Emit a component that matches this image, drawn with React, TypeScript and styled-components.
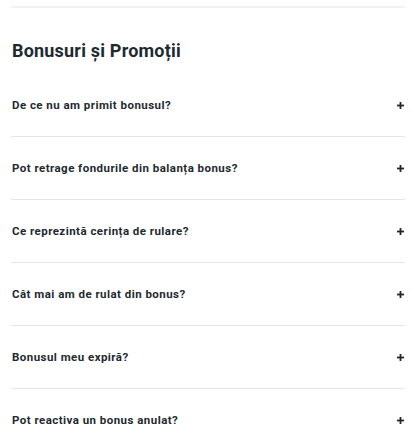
import React from "react";
import styled, { createGlobalStyle } from "styled-components";

const Global = createGlobalStyle`
  html, body { margin: 0; padding: 0; background: #ffffff; }
  body { font-family: Roboto, "Liberation Sans", sans-serif; color: #1e2a30; }
`;

const Page = styled.div`
  padding: 6px 12px 0 11px;
`;

const TopRule = styled.div`
  height: 2px;
  background: #f2f2f2;
`;

const Heading = styled.h2`
  margin: 0;
  padding: 31px 0 0 1px;
  height: 35px;
  font-size: 18px;
  font-weight: 700;
  line-height: 24px;
  color: #1e2a30;
  letter-spacing: 0.2px;
`;

const List = styled.div`
  display: flex;
  flex-direction: column;
`;

const Row = styled.div<{ $last?: boolean }>`
  display: flex;
  align-items: center;
  justify-content: space-between;
  height: 62px;
  padding-left: 1px;
  border-bottom: ${(p) => (p.$last ? "none" : "1px solid #e6e6e6")};
`;

const Question = styled.span`
  font-size: 11.5px;
  font-weight: 700;
  color: #1e2a30;
  letter-spacing: 0.46px;
`;

const Plus = styled.svg`
  width: 7px;
  height: 7px;
  margin-right: 1px;
  flex: none;
`;

const questions = [
  "De ce nu am primit bonusul?",
  "Pot retrage fondurile din balanța bonus?",
  "Ce reprezintă cerința de rulare?",
  "Cât mai am de rulat din bonus?",
  "Bonusul meu expiră?",
  "Pot reactiva un bonus anulat?",
];

export default function App() {
  return (
    <>
      <Global />
      <Page>
        <TopRule />
        <Heading>Bonusuri și Promoții</Heading>
        <List>
          {questions.map((q, i) => (
            <Row key={q} $last={i === questions.length - 1}>
              <Question>{q}</Question>
              <Plus viewBox="0 0 7 7">
                <rect x="2.6" y="0" width="1.8" height="7" fill="#1e2a30" />
                <rect x="0" y="2.6" width="7" height="1.8" fill="#1e2a30" />
              </Plus>
            </Row>
          ))}
        </List>
      </Page>
    </>
  );
}
